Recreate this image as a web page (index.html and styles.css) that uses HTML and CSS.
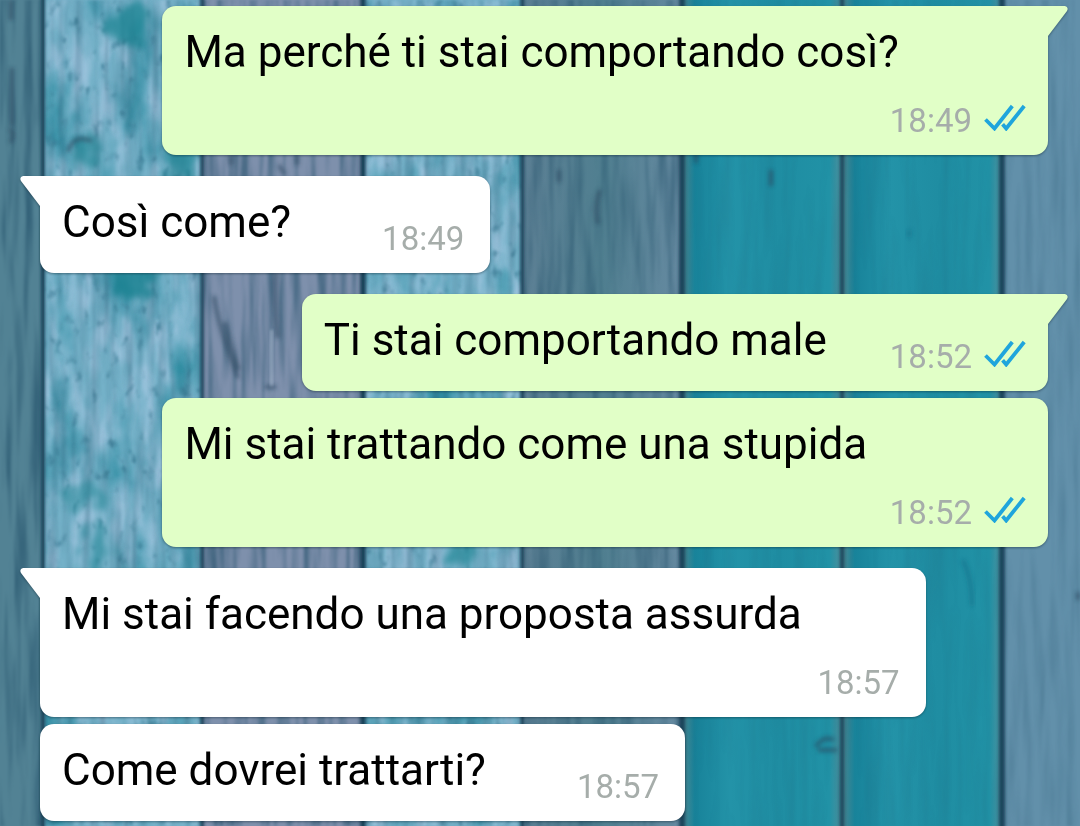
FILE: index.html
```html
<!DOCTYPE html>
<html lang="it">
<head>
<meta charset="utf-8">
<meta name="viewport" content="width=device-width, initial-scale=1">
<title>Chat</title>
<link rel="stylesheet" href="styles.css">
</head>
<body>
<svg class="wallpaper" viewBox="0 0 1080 826" preserveAspectRatio="none" aria-hidden="true">
  <defs>
    <filter id="grain" x="0" y="0" width="100%" height="100%" color-interpolation-filters="sRGB">
      <feTurbulence type="fractalNoise" baseFrequency="0.12 0.008" numOctaves="3" seed="4"/>
      <feColorMatrix values="0 0 0 0 0.12  0 0 0 0 0.3  0 0 0 0 0.4  2.4 0 0 0 -1"/>
      <feGaussianBlur stdDeviation="0.9"/>
    </filter>
    <filter id="paint" x="0" y="0" width="100%" height="100%" color-interpolation-filters="sRGB">
      <feTurbulence type="fractalNoise" baseFrequency="0.026 0.012" numOctaves="5" seed="11"/>
      <feColorMatrix values="0 0 0 0 0.14  0 0 0 0 0.53  0 0 0 0 0.61  2.6 0 0 0 -1.25"/>
      <feGaussianBlur stdDeviation="1.6"/>
    </filter>
    <filter id="flakes" x="0" y="0" width="100%" height="100%" color-interpolation-filters="sRGB">
      <feTurbulence type="fractalNoise" baseFrequency="0.07 0.022" numOctaves="4" seed="23"/>
      <feColorMatrix values="0 0 0 0 0.62  0 0 0 0 0.77  0 0 0 0 0.87  0 3 0 0 -1.2"/>
      <feGaussianBlur stdDeviation="1.5"/>
    </filter>
    <filter id="specks" x="0" y="0" width="100%" height="100%" color-interpolation-filters="sRGB">
      <feTurbulence type="fractalNoise" baseFrequency="0.11 0.06" numOctaves="3" seed="8"/>
      <feColorMatrix values="0 0 0 0 0.18  0 0 0 0 0.43  0 0 0 0 0.53  0 0 3 0 -1.85"/>
      <feGaussianBlur stdDeviation="1.3"/>
    </filter>
    <filter id="knot" x="-50%" y="-50%" width="200%" height="200%" color-interpolation-filters="sRGB">
      <feTurbulence type="fractalNoise" baseFrequency="0.07 0.05" numOctaves="3" seed="2" result="n"/>
      <feDisplacementMap in="SourceGraphic" in2="n" scale="36" xChannelSelector="R" yChannelSelector="G"/>
      <feGaussianBlur stdDeviation="3"/>
    </filter>
    <filter id="crack" x="-5%" y="-5%" width="110%" height="110%"><feGaussianBlur stdDeviation="2"/></filter>
    <filter id="edge" x="-5%" y="-5%" width="110%" height="110%"><feGaussianBlur stdDeviation="1.5"/></filter>
    <linearGradient id="teal">
      <stop offset="0" stop-color="#4f8790"/><stop offset=".08" stop-color="#18839a"/>
      <stop offset=".3" stop-color="#2393a8"/><stop offset=".6" stop-color="#1f8da2"/>
      <stop offset=".92" stop-color="#2192a6"/><stop offset="1" stop-color="#4e8f9b"/>
    </linearGradient>
    <linearGradient id="slate">
      <stop offset="0" stop-color="#5d8095"/><stop offset=".5" stop-color="#507f90"/><stop offset="1" stop-color="#668aa1"/>
    </linearGradient>
  </defs>
  <rect width="1080" height="826" fill="#528294"/>
  <rect x="44" width="158" height="826" fill="#74b1c8"/>
  <rect x="202" width="160" height="826" fill="#7e90ac"/>
  <rect x="364" width="158" height="826" fill="#74b1c8"/>
  <rect x="522" width="160" height="826" fill="url(#slate)"/>
  <rect x="682" width="160" height="826" fill="url(#teal)"/>
  <rect x="842" width="160" height="826" fill="url(#teal)"/>
  <rect x="1002" width="78" height="826" fill="#6290aa"/>
  <g opacity=".85">
    <rect x="44" width="158" height="826" filter="url(#flakes)"/>
    <rect x="364" width="158" height="826" filter="url(#flakes)"/>
    <rect x="44" width="158" height="826" filter="url(#paint)"/>
    <rect x="364" width="158" height="826" filter="url(#paint)"/>
    <rect x="44" width="158" height="826" filter="url(#specks)"/>
    <rect x="364" width="158" height="826" filter="url(#specks)"/>
  </g>
  <rect width="44" height="826" filter="url(#grain)" opacity=".6"/>
  <rect x="44" width="158" height="826" filter="url(#grain)" opacity=".3"/>
  <rect x="202" width="160" height="826" filter="url(#grain)" opacity=".6"/>
  <rect x="362" width="160" height="826" filter="url(#grain)" opacity=".3"/>
  <rect x="522" width="160" height="826" filter="url(#grain)" opacity=".5"/>
  <rect x="682" width="320" height="826" filter="url(#grain)" opacity=".1"/>
  <rect x="1002" width="78" height="826" filter="url(#grain)" opacity=".2"/>
  <g filter="url(#knot)" fill="#16808e">
    <ellipse cx="132" cy="24" rx="20" ry="22" opacity=".7"/>
    <ellipse cx="86" cy="152" rx="16" ry="16" opacity=".6"/>
    <ellipse cx="178" cy="145" rx="16" ry="34" opacity=".6"/>
    <ellipse cx="133" cy="282" rx="22" ry="16" opacity=".8"/>
    <ellipse cx="84" cy="496" rx="20" ry="12" opacity=".45"/>
    <ellipse cx="98" cy="545" rx="12" ry="30" opacity=".55"/>
    <ellipse cx="462" cy="556" rx="18" ry="8" opacity=".6"/>
  </g>
  <g filter="url(#crack)" fill="none" stroke="#29475f" stroke-width="4" opacity=".65">
    <path d="M11 0V20M12 68V126M10 128q5 8 0 15"/>
    <path d="M214 296q4 30 24 82M225 322q8 32 14 48M276 272q-2 30 2 66M265 387h11"/>
    <path d="M68 152q5-19 24-11M231 155v10M297 155v10M279 165l6 10"/>
    <path d="M559 170v12M600 190q-6 16-2 34M696 153v10M771 170v16"/>
    <path d="M816 747q7-12 18-7M818 750h19M1078 592v8"/>
  </g>
  <path d="M963 560q9 18 9 46M909 230v7" fill="none" stroke="#176f8a" stroke-width="4" opacity=".6" filter="url(#crack)"/>
  <path d="M270 330h3v56h-3z" fill="#a9b9cf" opacity=".6" filter="url(#edge)"/>
  <g filter="url(#edge)" stroke="#123d54" stroke-width="4" opacity=".9">
    <path d="M43-9V835M202-9V835M522-9V835M842-9V835"/>
    <path d="M363-9V835M682-9V835M1002-9V835" stroke-width="6"/>
  </g>
  <symbol id="ticks" viewBox="0 0 42 27">
    <path d="M1.5 15.5 10.5 24.5 28.3 2M18.6 20.3 22.2 24.5 40.2 2" fill="none" stroke="#1fa5dc" stroke-width="3.8"/>
  </symbol>
</svg>

<main class="chat">
  <article class="bubble out tailed">
    <svg class="tail" viewBox="0 0 21 32" aria-hidden="true"><path d="M0 0H18Q22 1 20 5L1 30V32H0Z"/></svg>
    <p class="text">Ma perché ti stai comportando così?</p>
    <div class="meta"><time>18:49</time><svg class="ticks" role="img" aria-label="Letto"><use href="#ticks"/></svg></div>
  </article>
  <article class="bubble in tailed">
    <svg class="tail" viewBox="0 0 21 32" aria-hidden="true"><path d="M21 0H3Q-1 1 1 5L20 30V32H21Z"/></svg>
    <p class="text">Così come?</p>
    <div class="meta"><time>18:49</time></div>
  </article>
  <article class="bubble out tailed">
    <svg class="tail" viewBox="0 0 21 32" aria-hidden="true"><path d="M0 0H18Q22 1 20 5L1 30V32H0Z"/></svg>
    <p class="text">Ti stai comportando male</p>
    <div class="meta"><time>18:52</time><svg class="ticks" role="img" aria-label="Letto"><use href="#ticks"/></svg></div>
  </article>
  <article class="bubble out">
    <p class="text">Mi stai trattando come una stupida</p>
    <div class="meta"><time>18:52</time><svg class="ticks" role="img" aria-label="Letto"><use href="#ticks"/></svg></div>
  </article>
  <article class="bubble in tailed">
    <svg class="tail" viewBox="0 0 21 32" aria-hidden="true"><path d="M21 0H3Q-1 1 1 5L20 30V32H21Z"/></svg>
    <p class="text">Mi stai facendo una proposta assurda</p>
    <div class="meta"><time>18:57</time></div>
  </article>
  <article class="bubble in">
    <p class="text">Come dovrei trattarti?</p>
    <div class="meta"><time>18:57</time></div>
  </article>
</main>
</body>
</html>
```
FILE: styles.css
```css
* {
  box-sizing: border-box;
}

body {
  margin: 0;
  background: #4c7c8e;
  font-family: Roboto, "Liberation Sans", sans-serif;
}

.wallpaper {
  position: fixed;
  inset: 0;
  z-index: -1;
  width: 100%;
  height: 100%;
}

.chat {
  display: flex;
  flex-direction: column;
  gap: 7px;
  padding: 6px 32px 5px 40px;
}

.bubble {
  position: relative;
  display: flex;
  flex-wrap: wrap;
  max-width: 82vw;
  padding: 20px 22px 15px;
  border-radius: 14px;
  filter: drop-shadow(0 1px 1px rgba(0, 20, 30, 0.4));
}

.in {
  align-self: flex-start;
  padding-right: 26px;
  background: #fff;
}

.out {
  align-self: flex-end;
  background: #e1ffc7;
}

.bubble + .tailed {
  margin-top: 14px;
}

.in.tailed {
  border-top-left-radius: 0;
}

.out.tailed {
  border-top-right-radius: 0;
}

.tail {
  position: absolute;
  top: 0;
  width: 21px;
  height: 32px;
}

.in .tail {
  right: 100%;
  margin-right: -1px;
  fill: #fff;
}

.out .tail {
  left: 100%;
  margin-left: -1px;
  fill: #e1ffc7;
}

.text {
  margin: 0;
  padding-bottom: 10px;
  color: #000;
  font-size: 44px;
  line-height: 52px;
}

.meta {
  display: flex;
  align-items: flex-end;
  gap: 12px;
  min-height: 52px;
  margin-left: auto;
  padding-left: 91px;
  color: #a6adaa;
  font-size: 33px;
  line-height: 39px;
}

.out .meta {
  padding-left: 63px;
}

.ticks {
  width: 42px;
  height: 27px;
  margin-bottom: 9px;
}
```
